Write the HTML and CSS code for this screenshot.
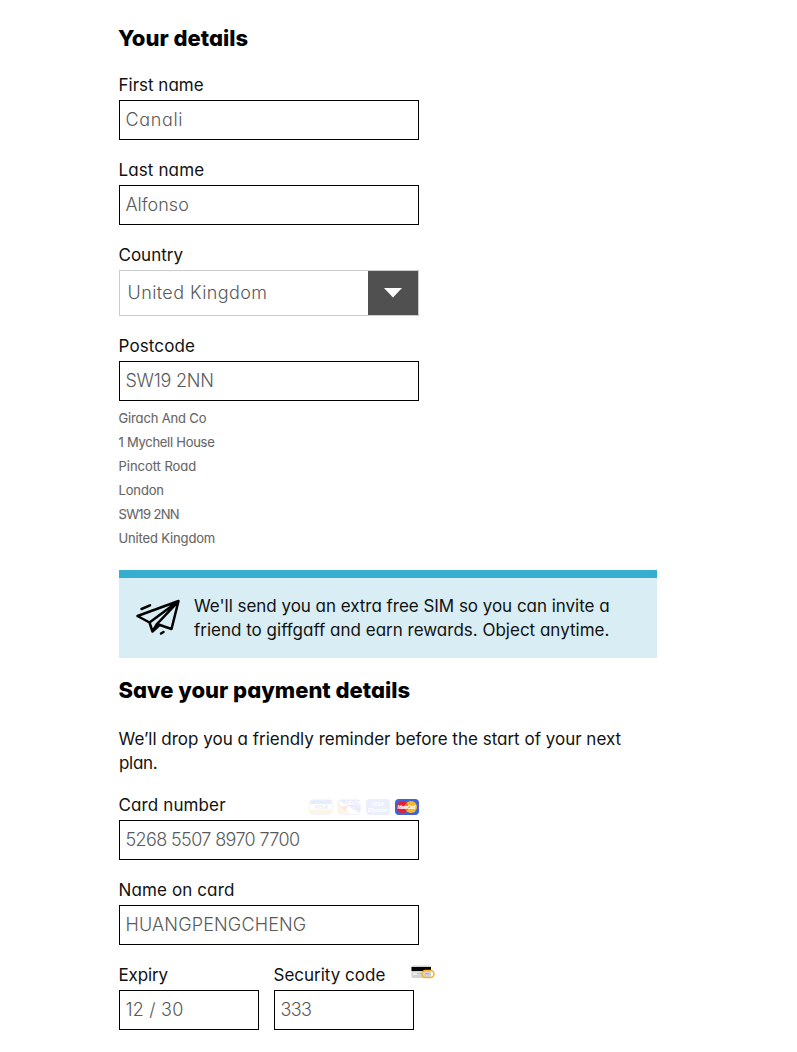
FILE: index.html
```
<!DOCTYPE html>
<html lang="en">
<head>
<meta charset="utf-8">
<title>Your details</title>
<link rel="stylesheet" href="styles.css">
</head>
<body>
<main class="form">
  <h2 class="heading">Your details</h2>
  <div class="field"><div class="label">First name</div><div class="input name">Canali</div></div>
  <div class="field"><div class="label wide">Last name</div><div class="input">Alfonso</div></div>
  <div class="field"><div class="label">Country</div>
    <div class="select"><span>United Kingdom</span><div class="arrow"><svg width="18" height="10" viewBox="0 0 18 10"><path d="M0 0h18L9 9.500z" fill="#fff"/></svg></div></div></div>
  <div class="field"><div class="label wide">Postcode</div><div class="input postcode">SW19 2NN</div></div>
  <div class="address"><span>Girach And Co</span><span class="house">1 Mychell House</span><span class="regular">Pincott Road</span><span>London</span><span class="code">SW19 2NN</span><span>United Kingdom</span></div>
  <div class="notice"><svg class="plane" width="46" height="40" viewBox="0 0 46 40" fill="none" stroke="#000" stroke-width="2.500" stroke-linejoin="round" stroke-linecap="round"><path d="M2.500 18 43.500 3 36.500 31 22 26M2.500 18l12 6.500L43.500 3 22 26l-4.500 7.500L14.500 24.500M17.500 33.500l7-6.500M23 25 43 4M6.500 11l8.500-3.700M26 35.500l2.500-1.500"/></svg>
  <p class="text"><span class="tight">We'll send you an extra free SIM so you can invite a</span><br>friend to giffgaff and earn rewards. Object anytime.</p></div>
  <h2 class="heading save">Save your payment details</h2>
  <p class="text intro">We’ll drop you a friendly reminder before the start of your next<br><span class="last">plan.</span></p>
  <div class="field"><div class="label cardlabel"><span class="wide">Card number</span>
    <svg class="cards" width="111" height="17" viewBox="0 0 111 17">
      <g opacity=".11">
        <rect x="1.500" y=".5" width="23" height="15" rx="4" fill="#fff" stroke="#90a4ff"/>
        <path d="M2 4V4q0-3 3-3h16q3 0 3 3v1H2z" fill="#3268e0"/><path d="M2 11h22v1q0 3-3 3H5q-3 0-3-3z" fill="#f2a021"/>
        <text x="6" y="10.300" class="brand visa" fill="#3046b0">VISA</text>
        <rect x="29.500" y=".5" width="23" height="15" rx="4" fill="#fff" stroke="#90a4ff"/>
        <path d="M30 1h22v13z" fill="#4867e0"/><path d="M30 3 42 15H30z" fill="#f2a021"/><path d="m33 8 8-2-4 6z" fill="#e02020"/><text x="37" y="6" class="brand" fill="#fff">DELTA</text>
        <rect x="58" y="0" width="24" height="16" rx="4" fill="#5577ee"/><text x="64" y="7" class="brand" fill="#fff">VISA</text><text x="60" y="13" class="brand" fill="#fff">Electron</text>
      </g>
      <rect x="87" y="0" width="24" height="16" rx="4" fill="#4263d6"/>
      <circle cx="94.500" cy="8" r="6" fill="#e8202c"/><circle cx="103" cy="8" r="6" fill="#f8b72c"/><path d="M98.750 3.800a6 6 0 0 1 0 8.400 6 6 0 0 1 0-8.400z" fill="#f06b25"/><text x="89.500" y="9.800" textLength="18" class="brand" fill="#fff">MasterCard</text>
    </svg></div><div class="input digits">5268 5507 8970 7700</div></div>
  <div class="field"><div class="label wide">Name on card</div><div class="input holder">HUANGPENGCHENG</div></div>
  <div class="row"><div class="field short"><div class="label expiry">Expiry</div><div class="input date">12 / 30</div></div>
  <div class="field short"><div class="label seclabel"><span>Security code</span>
    <svg class="cvv" width="24" height="14" viewBox="0 0 24 14"><rect x=".5" y=".5" width="19.500" height="12.500" rx="1.500" fill="#d3d3d6"/><path d="M.5 2h19.500v4H.5z" fill="#000"/><path d="M2 7.500h10v2.500H2z" fill="#eee"/><path d="M6 8.800h5m3 0h4" stroke="#aaa"/><rect x="11" y="5.500" width="12" height="7" rx="3.500" fill="none" stroke="#fbb021" stroke-width="1.500"/></svg></div><div class="input cvc">333</div></div></div>
</main>
</body>
</html>
```
FILE: styles.css
```
* { box-sizing: border-box; }
body { margin: 0; background: #fff; color: #111; font-family: Inter, sans-serif; font-feature-settings: "cv11"; }
.form { width: 538px; margin-left: 119px; padding-top: 26px; }
.heading { margin: 0 0 20px; font-size: 22px; line-height: 24px; font-weight: 800; color: #000; text-indent: -1px; }
.save { text-indent: -0.5px; }
.field { width: 300px; margin-bottom: 15px; }
.label { display: block; font-size: 17px; line-height: 30px; text-indent: -0.5px; }
.wide { letter-spacing: 0.12px; }
.input { height: 40px; border: 1px solid #000; padding-left: 6px; line-height: 38px; font-size: 18px; font-weight: 300; color: #5a5a5a; text-indent: -0.5px; }
.name { letter-spacing: 0.65px; }
.postcode { letter-spacing: -0.25px; }
.digits { letter-spacing: -0.62px; }
.holder { letter-spacing: 0.16px; }
.date { letter-spacing: 0.2px; }
.cvc { letter-spacing: -0.7px; }
.expiry { letter-spacing: -0.15px; }
.select { display: flex; justify-content: space-between; height: 46px; border: 1px solid #ccc; padding-left: 7.5px; line-height: 44px; font-size: 18px; font-weight: 300; color: #5a5a5a; letter-spacing: 0.4px; }
.arrow { width: 50px; background: #505050; display: flex; align-items: center; justify-content: center; }
.address { margin-top: -10px; font-size: 13px; line-height: 24px; color: #666; display: grid; justify-items: start; text-indent: -0.5px; letter-spacing: -0.15px; -webkit-text-stroke: 0.1px #666; }
.house { letter-spacing: -0.27px; }
.regular { letter-spacing: -0.03px; }
.code { letter-spacing: -0.65px; }
.notice { margin: 20px 0; border-top: 8px solid #35aed0; background: #d8eef4; padding: 16px; display: flex; gap: 13px; }
.plane { margin-top: 4px; }
.text { margin: 0; font-size: 17px; line-height: 24px; white-space: nowrap; }
.tight { letter-spacing: -0.03px; }
.intro { margin: 25px 0 15px; text-indent: -0.5px; }
.last { letter-spacing: -0.3px; }
.cardlabel, .seclabel { display: flex; justify-content: space-between; }
.cards { margin-top: 9px; }
.brand { font: italic bold 5px "Liberation Sans", sans-serif; }
.visa { font-size: 6px; }
.seclabel { width: 161px; }
.cvv { margin-top: 5px; }
.row { display: flex; gap: 15px; }
.short { width: 140px; }
```
